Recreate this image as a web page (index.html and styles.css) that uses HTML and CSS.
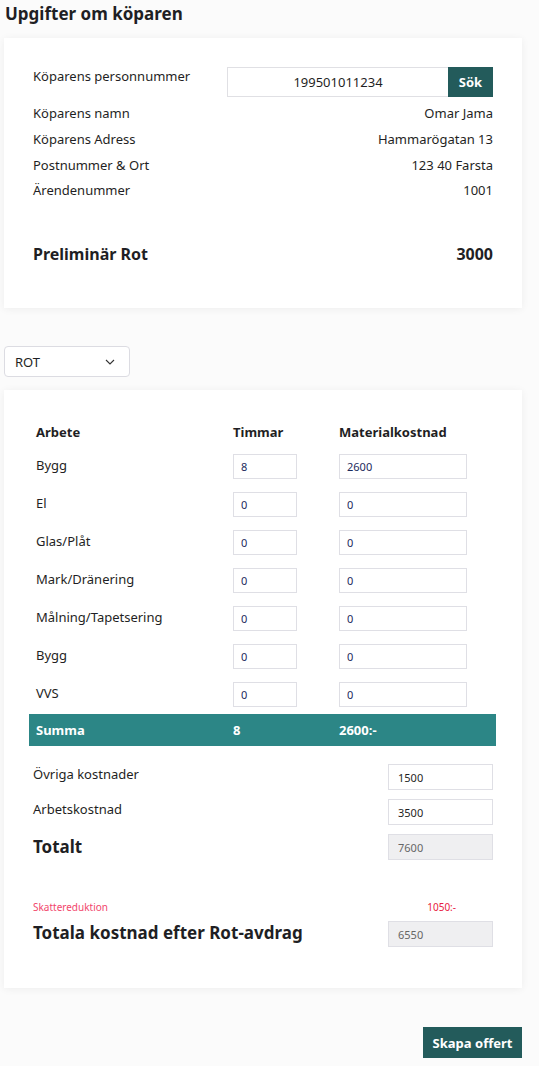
FILE: index.html
```html
<!DOCTYPE html>
<html lang="sv">
<head>
<meta charset="utf-8">
<title>Upgifter om köparen</title>
<link rel="stylesheet" href="styles.css">
</head>
<body>
<div class="page">
  <h1 class="title">Upgifter om köparen</h1>

  <section class="card buyer">
    <div class="row row-search">
      <span class="label">Köparens personnummer</span>
      <div class="search">
        <input class="search-input" type="text" value="199501011234">
        <button class="btn-dark btn-sok">Sök</button>
      </div>
    </div>
    <div class="row info"><span>Köparens namn</span><span>Omar Jama</span></div>
    <div class="row info"><span>Köparens Adress</span><span>Hammarögatan 13</span></div>
    <div class="row info"><span>Postnummer &amp; Ort</span><span>123 40 Farsta</span></div>
    <div class="row info"><span>Ärendenummer</span><span>1001</span></div>
    <div class="row rot"><span>Preliminär Rot</span><span>3000</span></div>
  </section>

  <div class="select">
    <span>ROT</span>
    <svg class="chev" width="10" height="6" viewBox="0 0 10 6"><path d="M1 1 L5 5 L9 1" fill="none" stroke="#333" stroke-width="1.1"/></svg>
  </div>

  <section class="card work">
    <div class="grid">
      <div class="cell head">Arbete</div><div class="cell head">Timmar</div><div class="cell head">Materialkostnad</div>

      <div class="cell name">Bygg</div><div class="cell"><input class="in-h" value="8"></div><div class="cell"><input class="in-m" value="2600"></div>
      <div class="cell name">El</div><div class="cell"><input class="in-h" value="0"></div><div class="cell"><input class="in-m" value="0"></div>
      <div class="cell name">Glas/Plåt</div><div class="cell"><input class="in-h" value="0"></div><div class="cell"><input class="in-m" value="0"></div>
      <div class="cell name">Mark/Dränering</div><div class="cell"><input class="in-h" value="0"></div><div class="cell"><input class="in-m" value="0"></div>
      <div class="cell name">Målning/Tapetsering</div><div class="cell"><input class="in-h" value="0"></div><div class="cell"><input class="in-m" value="0"></div>
      <div class="cell name">Bygg</div><div class="cell"><input class="in-h" value="0"></div><div class="cell"><input class="in-m" value="0"></div>
      <div class="cell name">VVS</div><div class="cell"><input class="in-h" value="0"></div><div class="cell"><input class="in-m" value="0"></div>
    </div>
    <div class="sum">
      <span>Summa</span><span>8</span><span>2600:-</span>
    </div>

    <div class="costs">
      <div class="crow"><span class="clabel">Övriga kostnader</span><input class="cin" value="1500"></div>
      <div class="crow"><span class="clabel">Arbetskostnad</span><input class="cin" value="3500"></div>
      <div class="crow"><span class="clabel big">Totalt</span><input class="cin dis" value="7600" disabled></div>
    </div>

    <div class="tax">
      <span class="tax-label">Skattereduktion</span>
      <span class="tax-val">1050:-</span>
    </div>
    <div class="crow final"><span class="clabel big">Totala kostnad efter Rot-avdrag</span><input class="cin dis" value="6550" disabled></div>
  </section>

  <div class="actions">
    <button class="btn-dark btn-offert">Skapa offert</button>
  </div>
</div>
</body>
</html>
```

FILE: styles.css
```css
* { box-sizing: border-box; }
html, body { margin: 0; padding: 0; }
body {
  background: #fbfbfb;
  font-family: "Noto Sans", "Open Sans", sans-serif;
  color: #1f1f24;
  font-size: 13px;
}
.page {
  width: 518px;
  margin-left: 4px;
  padding-bottom: 7px;
}
.title {
  margin: 0;
  padding: 3px 0 0 1px;
  height: 38px;
  font-size: 17px;
  font-weight: 700;
  line-height: 22px;
}
.card {
  background: #fff;
  box-shadow: 0 1px 8px rgba(0,0,0,0.06);
}
.buyer {
  padding: 29px 29px 43px 29px;
  height: 270px;
}
.row { display: flex; justify-content: space-between; }
.row-search { align-items: flex-start; height: 33px; }
.row-search .label { padding-top: 1px; line-height: 16px; }
.search { display: flex; }
.search-input {
  width: 221px;
  height: 30px;
  border: 1px solid #e0e0e4;
  border-right: none;
  text-align: center;
  font-family: inherit;
  font-size: 13px;
  color: #1f1f24;
  outline: none;
  padding: 0;
}
.btn-dark {
  background: #235b5b;
  color: #fff;
  border: none;
  font-family: inherit;
  font-weight: 700;
  cursor: pointer;
}
.btn-sok { width: 45px; height: 30px; font-size: 13px; padding: 0; }
.info { height: 25.8px; line-height: 27px; }
.rot {
  margin-top: 40px;
  font-size: 16px;
  font-weight: 700;
  line-height: 22px;
}
.select {
  margin-top: 38px;
  width: 126px;
  height: 31px;
  background: #fff;
  border: 1px solid #dcdce2;
  border-radius: 4px;
  display: flex;
  align-items: center;
  justify-content: space-between;
  padding: 0 14px 0 10px;
  font-size: 13px;
}
.chev { display: block; }
.work {
  margin-top: 13px;
  padding: 30px 26px 32px 25px;
}
.grid {
  display: grid;
  grid-template-columns: 197px 106px 1fr;
  grid-template-rows: 28px;
  grid-auto-rows: 38px;
}
.cell { padding: 0 7px; }
.head { font-weight: 700; line-height: 16px; padding-top: 4px; }
.name { padding-top: 9px; line-height: 16px; }
.cell input {
  margin-top: 6px;
  height: 25px;
  border: 1px solid #dfdfe5;
  font-family: inherit;
  font-size: 11px;
  color: #1b2a5c;
  padding: 0 7px;
  outline: none;
  background: #fff;
}
.in-h { width: 64px; }
.in-m { width: 128px; }
.sum {
  display: grid;
  grid-template-columns: 197px 106px 1fr;
  background: #2c8686;
  color: #fff;
  font-weight: 700;
  height: 32px;
  align-items: center;
}
.sum span { padding: 0 7px; }
.costs { padding: 18px 3px 0 4px; }
.crow {
  display: flex;
  justify-content: space-between;
  align-items: flex-start;
  height: 35px;
}
.clabel { line-height: 18px; padding-top: 1px; }
.clabel.big { font-size: 17px; font-weight: 700; line-height: 24px; }
.cin {
  width: 105px;
  height: 26px;
  border: 1px solid #dfdfe5;
  font-family: inherit;
  font-size: 11px;
  color: #1f1f24;
  padding: 0 9px;
  outline: none;
  background: #fff;
}
.cin.dis { background: #efeff1; color: #666; }
.tax {
  display: flex;
  justify-content: space-between;
  padding: 31px 40px 0 4px;
  font-size: 10px;
  line-height: 14px;
}
.tax-label { color: #f2466c; }
.tax-val { color: #e8203f; }
.final { margin: 7px 3px 0 4px; }
.final .clabel.big { padding-top: 0; }
.actions {
  display: flex;
  justify-content: flex-end;
  margin-top: 39px;
}
.btn-offert {
  width: 99px;
  height: 31px;
  font-size: 13px;
  padding: 0;
}
```
